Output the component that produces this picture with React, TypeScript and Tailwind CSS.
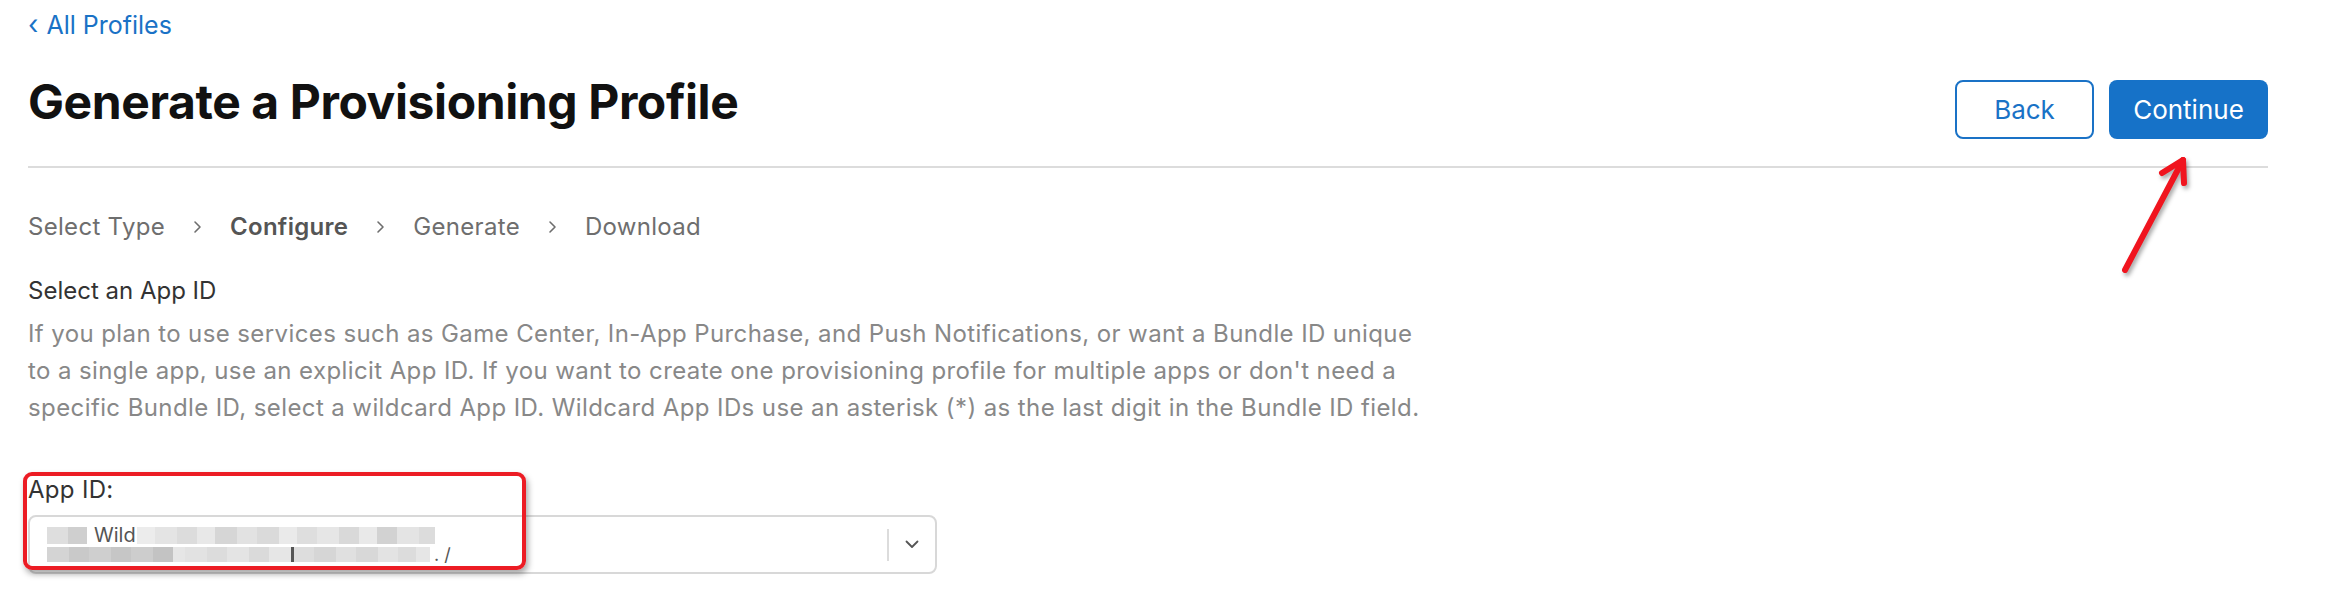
const steps = [
  { label: "Select Type", active: false },
  { label: "Configure", active: true },
  { label: "Generate", active: false },
  { label: "Download", active: false },
];

const topTiles = [
  { w: "w-[21px]", c: "bg-[#dedede]" },
  { w: "w-[19px]", c: "bg-[#cfcfcf]" },
];

const topTilesAfter = [
  { w: "w-[18px]", c: "bg-[#ececec]" },
  { w: "w-[22px]", c: "bg-[#e4e4e4]" },
  { w: "w-[20px]", c: "bg-[#dcdcdc]" },
  { w: "w-[18px]", c: "bg-[#e8e8e8]" },
  { w: "w-[22px]", c: "bg-[#d6d6d6]" },
  { w: "w-[20px]", c: "bg-[#e2e2e2]" },
  { w: "w-[22px]", c: "bg-[#dadada]" },
  { w: "w-[18px]", c: "bg-[#eaeaea]" },
  { w: "w-[20px]", c: "bg-[#dedede]" },
  { w: "w-[22px]", c: "bg-[#e6e6e6]" },
  { w: "w-[20px]", c: "bg-[#d9d9d9]" },
  { w: "w-[18px]", c: "bg-[#e9e9e9]" },
  { w: "w-[20px]", c: "bg-[#d2d2d2]" },
  { w: "w-[22px]", c: "bg-[#e4e4e4]" },
  { w: "w-[16px]", c: "bg-[#dcdcdc]" },
];

const bottomTiles = [
  { w: "w-[22px]", c: "bg-[#d4d4d4]" },
  { w: "w-[20px]", c: "bg-[#c9c9c9]" },
  { w: "w-[22px]", c: "bg-[#cfcfcf]" },
  { w: "w-[20px]", c: "bg-[#c6c6c6]" },
  { w: "w-[22px]", c: "bg-[#cdcdcd]" },
  { w: "w-[20px]", c: "bg-[#c3c3c3]" },
  { w: "w-[12px]", c: "bg-[#e6e6e6]" },
  { w: "w-[22px]", c: "bg-[#e2e2e2]" },
  { w: "w-[20px]", c: "bg-[#dcdcdc]" },
  { w: "w-[22px]", c: "bg-[#e4e4e4]" },
  { w: "w-[20px]", c: "bg-[#dadada]" },
  { w: "w-[22px]", c: "bg-[#e6e6e6]" },
  { w: "w-[3px]", c: "bg-[#555555]" },
  { w: "w-[20px]", c: "bg-[#dddddd]" },
  { w: "w-[22px]", c: "bg-[#d6d6d6]" },
  { w: "w-[20px]", c: "bg-[#e0e0e0]" },
  { w: "w-[22px]", c: "bg-[#d8d8d8]" },
  { w: "w-[20px]", c: "bg-[#e3e3e3]" },
  { w: "w-[18px]", c: "bg-[#dcdcdc]" },
  { w: "w-[14px]", c: "bg-[#e6e6e6]" },
];

const Chevron = () => (
  <svg width="9" height="14" viewBox="0 0 9 14" fill="none">
    <path d="M2 2l5 5-5 5" stroke="#6e6e6e" strokeWidth="1.6" strokeLinecap="round" strokeLinejoin="round" />
  </svg>
);

const AppIdSelect = () => {
  return (
    <div className="w-[909px] h-[59px] mt-[11px] border-2 border-[#d8d8d8] rounded-[8px] flex items-center">
      <div className="flex-1 pl-[17px] flex flex-col">
        <div className="flex h-[17px] items-end">
          {topTiles.map((t, i) => (
            <div key={i} className={`${t.w} ${t.c} h-full`} />
          ))}
          <div className="w-[6px]" />
          <span className="text-[20px] leading-[17px] text-[#555] px-[1px]">Wild</span>
          {topTilesAfter.map((t, i) => (
            <div key={i} className={`${t.w} ${t.c} h-full`} />
          ))}
        </div>
        <div className="flex items-center h-[15px] mt-[3px]">
          {bottomTiles.map((t, i) => (
            <div key={i} className={`${t.w} ${t.c} h-full`} />
          ))}
          <span className="text-[18px] leading-[15px] text-[#555] pl-[4px]">. /</span>
        </div>
      </div>
      <div className="w-[2px] h-[32px] bg-[#dcdcdc]" />
      <div className="w-[46px] flex justify-center">
        <svg width="14" height="9" viewBox="0 0 14 9" fill="none">
          <path d="M1.5 1.5l5.5 5.5 5.5-5.5" stroke="#555" strokeWidth="1.8" strokeLinecap="round" strokeLinejoin="round" />
        </svg>
      </div>
    </div>
  );
};

const App = () => {
  return (
    <div className="relative w-full h-[598px] overflow-hidden bg-white pl-[28px] pr-[68px] font-['Inter',sans-serif]">
      <a className="flex items-center gap-[8px] pt-[10px] text-[25px] leading-[30px] text-[#1a72c6]">
        <span className="text-[27px]">‹</span>
        <span>All Profiles</span>
      </a>

      <div className="flex items-start justify-between mt-[34px]">
        <h1 className="text-[48px] leading-[56px] font-bold text-[#111] tracking-[-0.4px]">
          Generate a Provisioning Profile
        </h1>
        <div className="flex gap-[15px] mt-[6px]">
          <button className="w-[139px] h-[59px] border-2 border-[#1a72c6] rounded-[8px] text-[26px] text-[#1a72c6]">
            Back
          </button>
          <button className="w-[159px] h-[59px] bg-[#1672c8] rounded-[8px] text-[26px] text-white">
            Continue
          </button>
        </div>
      </div>

      <div className="h-[2px] bg-[#dcdcdc] mt-[27px]" />

      <div className="flex items-center gap-[28px] mt-[45px] text-[24px] leading-[28px] tracking-[0.3px]">
        {steps.map((s, i) => (
          <div key={s.label} className="flex items-center gap-[28px]">
            {i > 0 && <Chevron />}
            <span className={s.active ? "font-semibold text-[#555]" : "text-[#6e6e6e]"}>{s.label}</span>
          </div>
        ))}
      </div>

      <p className="mt-[36px] text-[24px] leading-[28px] text-[#333]">Select an App ID</p>
      <p className="mt-[10px] text-[24px] leading-[37px] text-[#888] tracking-[0.4px] whitespace-nowrap">
        <span className="block">
          If you plan to use services such as Game Center, In-App Purchase, and Push Notifications, or want a Bundle ID unique
        </span>
        <span className="block">
          to a single app, use an explicit App ID. If you want to create one provisioning profile for multiple apps or don't need a
        </span>
        <span className="block">
          specific Bundle ID, select a wildcard App ID. Wildcard App IDs use an asterisk (*) as the last digit in the Bundle ID field.
        </span>
      </p>

      <p className="mt-[50px] text-[24px] leading-[28px] text-[#333] tracking-[0.3px]">App ID:</p>
      <AppIdSelect />

      {/* annotation overlays */}
      <div className="absolute left-[23px] top-[472px] w-[503px] h-[98px] border-4 border-[#ec1c24] rounded-[9px] shadow-[2px_4px_6px_rgba(0,0,0,0.35)]" />
      <svg className="absolute left-[2110px] top-[150px]" width="90" height="135" viewBox="0 0 90 135" fill="none">
        <g stroke="#f0141e" strokeWidth="6" strokeLinecap="round" strokeLinejoin="round" style={{ filter: "drop-shadow(2px 3px 2px rgba(0,0,0,0.35))" }}>
          <path d="M15 120L73 10" />
          <path d="M52 23L73 10L74 33" />
        </g>
      </svg>
    </div>
  );
};

export default App;
